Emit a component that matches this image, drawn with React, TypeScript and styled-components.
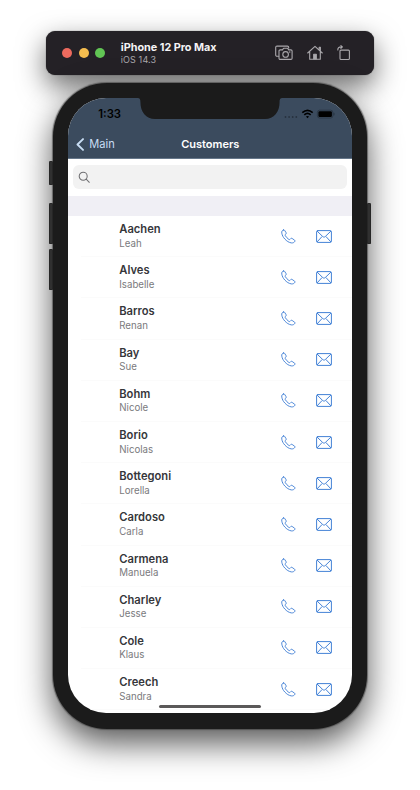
import React from "react";
import styled, { createGlobalStyle } from "styled-components";

const GlobalStyle = createGlobalStyle`
  * { box-sizing: border-box; }
  html, body { margin: 0; background: #fff; }
  body { font-family: Inter, "Liberation Sans", sans-serif; overflow: hidden; }
`;

const Page = styled.main`
  width: 420px;
  height: 790px;
  padding-top: 31px;
  display: flex;
  flex-direction: column;
  align-items: center;
  overflow: hidden;
  background: #fff;
`;

const WindowBar = styled.header`
  width: 328.5px;
  height: 43.5px;
  flex: none;
  display: flex;
  align-items: center;
  padding: 0 23px 0 16.5px;
  border-radius: 9px;
  background: #242126;
  box-shadow: 0 0 1px rgba(0, 0, 0, 0.7), 0 11px 28px rgba(0, 0, 0, 0.58);
`;

const Lights = styled.div`
  display: flex;
  gap: 6.5px;
`;

const Light = styled.i<{ $color: string }>`
  width: 10px;
  height: 10px;
  border-radius: 50%;
  background: ${(p) => p.$color};
`;

const DeviceInfo = styled.div`
  margin-left: 15.5px;
  flex: 1;
  white-space: nowrap;
`;

const DeviceName = styled.div`
  font-size: 10.8px;
  line-height: 13px;
  font-weight: 700;
  color: #f4f3f5;
`;

const DeviceOs = styled.div`
  font-size: 9px;
  line-height: 11px;
  letter-spacing: 0.12px;
  color: #aaa8ac;
`;

const Tools = styled.div`
  display: flex;
  align-items: center;
  gap: 14px;
  color: #aaa8ac;
  svg { display: block; }
`;

const Phone = styled.section`
  position: relative;
  flex: none;
  width: 314.5px;
  height: 645.5px;
  margin-top: 8.5px;
  padding: 15px 15.5px;
  border-radius: 54px;
  background: #1b1b1b;
  box-shadow: 0 0 1px 0.5px rgba(60, 60, 60, 0.6), 0 14px 33px rgba(0, 0, 0, 0.67);
`;

const SideButton = styled.i<{ $side: "left" | "right"; $top: number; $height: number }>`
  position: absolute;
  ${(p) => p.$side}: -4px;
  top: ${(p) => p.$top}px;
  width: 4.5px;
  height: ${(p) => p.$height}px;
  border-radius: 1.5px;
  background: #303030;
  box-shadow: inset 0 0 0 0.5px #1c1c1c;
`;

const Screen = styled.div`
  position: relative;
  height: 615px;
  border-radius: 38px;
  overflow: hidden;
  background: #fff;
`;

const NavArea = styled.div`
  height: 60.5px;
  background: #3b4b5e;
  border-bottom: 1px solid #66778a;
`;

const StatusBar = styled.div`
  height: 32px;
  display: flex;
  align-items: center;
  justify-content: space-between;
  padding: 0 17px 0 30px;
  color: #000;
`;

const Clock = styled.span`
  font-size: 11.3px;
  line-height: 14px;
  font-weight: 600;
`;

const Signals = styled.div`
  display: flex;
  align-items: center;
  svg { display: block; }
`;

const Notch = styled.svg`
  position: absolute;
  left: 69px;
  top: -1px;
`;

const NavBar = styled.nav`
  height: 28px;
  display: grid;
  grid-template-columns: 1fr auto 1fr;
  align-items: center;
  padding: 0 8px;
`;

const Back = styled.span`
  display: flex;
  align-items: center;
  gap: 5px;
  font-size: 11.1px;
  line-height: 14px;
  color: #c8ddf4;
`;

const NavTitle = styled.h1`
  margin: 0 0 0 0.5px;
  font-size: 11px;
  line-height: 14px;
  font-weight: 600;
  color: #fff;
`;

const SearchArea = styled.div`
  height: 37.5px;
  padding: 6.5px 5px 7px;
`;

const SearchField = styled.div`
  height: 24px;
  padding-left: 5px;
  display: flex;
  align-items: center;
  border-radius: 6px;
  background: #f2f2f2;
`;

const SectionBand = styled.div`
  height: 20px;
  background: #f0eff5;
`;

const List = styled.ul`
  margin: 0;
  padding: 0;
  list-style: none;
`;

const Row = styled.li`
  height: 41.2px;
  margin-left: 13px;
  padding: 0 19.5px 0 38px;
  display: flex;
  align-items: center;
  border-bottom: 1px solid #fbfbfb;
`;

const Person = styled.div`
  flex: 1;
  padding-top: 1px;
`;

const Surname = styled.div`
  font-size: 11.2px;
  line-height: 14.5px;
  font-weight: 600;
  color: #35363a;
`;

const GivenName = styled.div`
  font-size: 9.7px;
  line-height: 14.5px;
  color: #7a7a7d;
`;

const Actions = styled.div`
  display: flex;
  align-items: center;
  gap: 20.5px;
  color: #4482d6;
  svg { display: block; }
`;

const HomeIndicator = styled.i`
  position: absolute;
  left: 91px;
  bottom: 5.5px;
  width: 102px;
  height: 3px;
  border-radius: 2px;
  background: #5b5959;
`;

const Line = ({ w, h, sw = 1, children }: {
  w: number; h: number; sw?: number; children: React.ReactNode;
}) => (
  <svg width={w} height={h} viewBox={`0 0 ${w} ${h}`} fill="none" stroke="currentColor"
    strokeWidth={sw} strokeLinecap="round" strokeLinejoin="round">{children}</svg>
);

const ScreenshotIcon = () => (
  <Line w={18} h={16} sw={1.1}>
    <path d="M3.6 11.2H2A1.3 1.3 0 0 1 .7 9.9V2.4A1.3 1.3 0 0 1 2 1.1h10.4a1.3 1.3 0 0 1 1.3 1.3v.5" />
    <path d="M5.2 4.9h2.3l1.1-1.7h4l1.1 1.7h2.2a1.2 1.2 0 0 1 1.2 1.2v7.1a1.2 1.2 0 0 1-1.2 1.2H5.2A1.2 1.2 0 0 1 4 13.2V6.1a1.2 1.2 0 0 1 1.2-1.2Z" />
    <circle cx="10.6" cy="9.4" r="2.8" />
    <circle cx="14.7" cy="7.1" r=".25" />
  </Line>
);

const HomeIcon = () => (
  <Line w={16} h={16} sw={1.1}>
    <path d="M.7 8 8 1.3 15.3 8M2.7 7v7.3h10.6V7M12.2 4.7V2.3h1.2v3.2" />
    <path d="M6.7 14V9.3h2.6V14Z" fill="currentColor" />
  </Line>
);

const RotateIcon = () => (
  <Line w={14} h={16} sw={1.1}>
    <rect x="3" y="5.1" width="9.4" height="9.4" rx="1" />
    <path d="M.8 4.9c0-2 1-3 3.300-3h1.200M3.900.6l1.500 1.300L3.900 3.300" />
  </Line>
);

const PhoneIcon = () => (
  <Line w={15} h={15} sw={0.95}>
    <path d="M2.5 .9C1.1 1.3.5 2.5.8 4.2C1.2 6.4 2.2 8.3 3.8 10C5.6 12 7.8 13.5 10.3 13.9C11.9 14.1 13.2 13.5 13.9 12.3C14.1 11.9 14 11.5 13.6 11.2L11.2 9.5C10.6 9.1 10.1 9.2 9.7 9.6L8.9 10.4C8.6 10.7 8.2 10.7 7.8 10.4C6.3 9.3 5.1 8 4.2 6.5C4 6.1 4 5.8 4.3 5.5L4.9 5C5.3 4.6 5.3 4.2 5.1 3.7L3.7 1.5C3.4 1 3.1 .7 2.5 .9Z" />
  </Line>
);

const MailIcon = () => (
  <Line w={16} h={13} sw={1}>
    <rect x=".6" y=".6" width="14.8" height="11.8" rx="1.3" />
    <path d="m1.2 1.2 5.5 5.3c.8.8 1.8.8 2.6 0l5.5-5.3M1.2 11.8l4.6-5M14.8 11.8l-4.6-5" />
  </Line>
);

const customers: [string, string][] = [
  ["Aachen", "Leah"], ["Alves", "Isabelle"], ["Barros", "Renan"], ["Bay", "Sue"],
  ["Bohm", "Nicole"], ["Borio", "Nicolas"], ["Bottegoni", "Lorella"], ["Cardoso", "Carla"],
  ["Carmena", "Manuela"], ["Charley", "Jesse"], ["Cole", "Klaus"], ["Creech", "Sandra"],
];

export default function App() {
  return (
    <>
      <GlobalStyle />
      <Page>
        <WindowBar>
          <Lights>
            <Light $color="#ed6a5e" />
            <Light $color="#f5bd4f" />
            <Light $color="#61c554" />
          </Lights>
          <DeviceInfo>
            <DeviceName>iPhone 12 Pro Max</DeviceName>
            <DeviceOs>iOS 14.3</DeviceOs>
          </DeviceInfo>
          <Tools>
            <ScreenshotIcon />
            <HomeIcon />
            <RotateIcon />
          </Tools>
        </WindowBar>
        <Phone>
          <SideButton $side="left" $top={78} $height={24} />
          <SideButton $side="left" $top={120} $height={41} />
          <SideButton $side="left" $top={166} $height={41} />
          <SideButton $side="right" $top={120} $height={41} />
          <Screen>
            <NavArea>
              <StatusBar>
                <Clock>1:33</Clock>
                <Signals>
                  <svg width="51" height="12" viewBox="0 0 51 12" fill="none">
                    <g fill="#27323f">
                      <circle cx="1.5" cy="9" r=".9" /><circle cx="5.1" cy="9" r=".9" />
                      <circle cx="8.7" cy="9" r=".9" /><circle cx="12.3" cy="9" r=".9" />
                    </g>
                    <path d="M18.3 4.7q5.2-4.6 10.4 0M20.3 6.8q3.2-2.7 6.4 0" stroke="#000" strokeWidth="1.7" />
                    <path d="m21.900 8.600 1.600 1.700 1.600-1.700q-1.600-1.200-3.200 0Z" fill="#000" />
                    <rect x="33.4" y="2.2" width="15.5" height="7.8" rx="2.2" stroke="#25303c" strokeWidth=".7" />
                    <rect x="34.4" y="3.2" width="13.5" height="5.8" rx="1.2" fill="#000" />
                    <path d="M50 4.900v2.400" stroke="#25303c" strokeWidth=".8" />
                  </svg>
                </Signals>
              </StatusBar>
              <NavBar>
                <Back>
                  <Line w={8} h={13} sw={1.9}><path d="M7 1.100 1.500 6.500 7 11.900" /></Line>
                  Main
                </Back>
                <NavTitle>Customers</NavTitle>
              </NavBar>
            </NavArea>
            <SearchArea>
              <SearchField>
                <Line w={13} h={13} sw={1.05}>
                  <g stroke="#6f6f72"><circle cx="5.2" cy="5.2" r="4" /><path d="m8.200 8.200 3.100 3.100" /></g>
                </Line>
              </SearchField>
            </SearchArea>
            <SectionBand />
            <List>
              {customers.map(([surname, given]) => (
                <Row key={surname}>
                  <Person>
                    <Surname>{surname}</Surname>
                    <GivenName>{given}</GivenName>
                  </Person>
                  <Actions>
                    <PhoneIcon />
                    <MailIcon />
                  </Actions>
                </Row>
              ))}
            </List>
            <Notch width="146" height="23" viewBox="0 0 146 23">
              <path d="M0 0H146V1C143 1 142.6 2.5 142.6 5C142.6 15 137 22 128 22H18C9 22 3.4 15 3.4 5C3.4 2.5 3 1 0 1Z" fill="#1b1b1b" />
            </Notch>
            <HomeIndicator />
          </Screen>
        </Phone>
      </Page>
    </>
  );
}
